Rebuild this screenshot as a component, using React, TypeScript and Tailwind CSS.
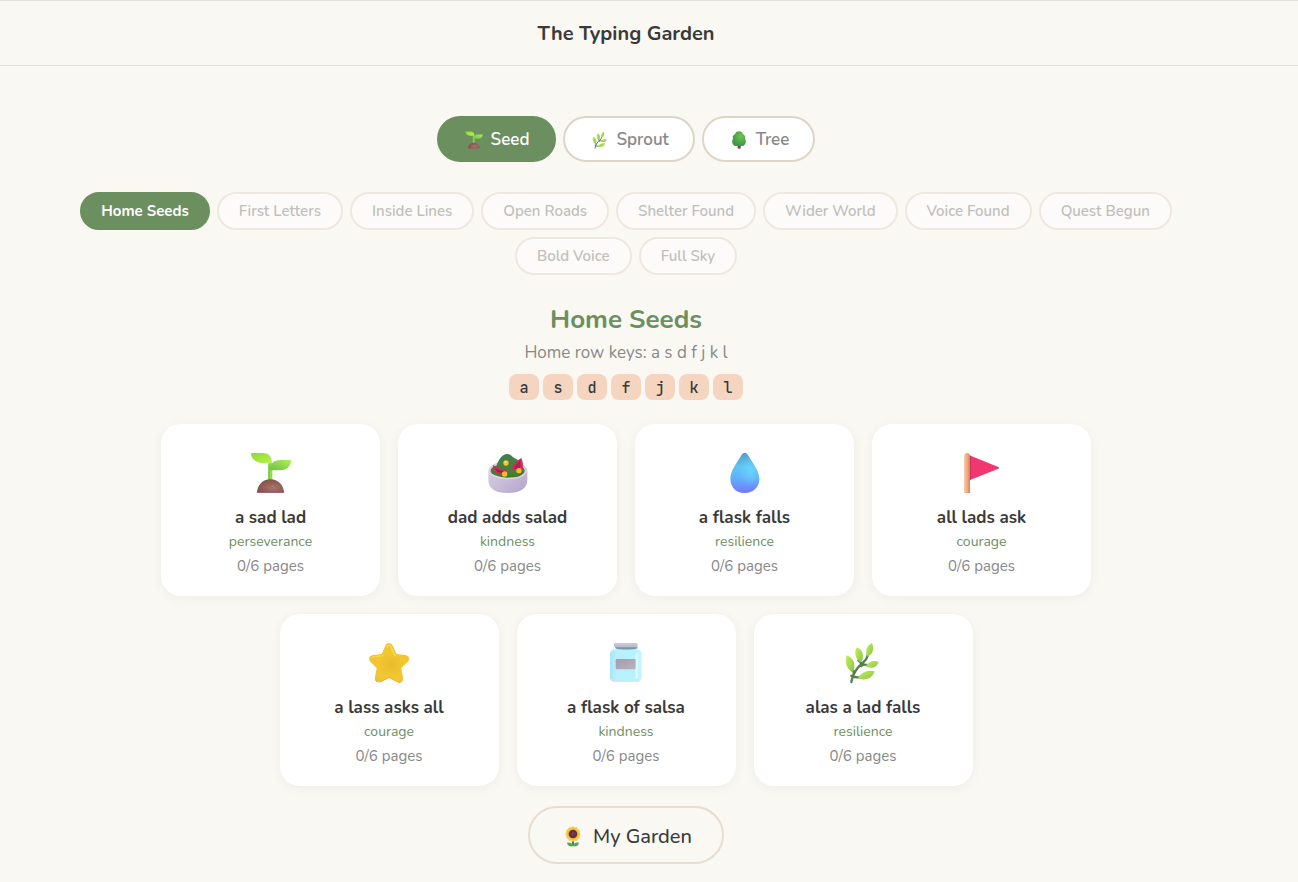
import type { ReactNode } from "react";
import clsx from "clsx";

type IconProps = { className?: string };

// shared by every icon, so the ids only exist once on the page
function Gradients() {
  return (
    <svg className="absolute h-0 w-0" aria-hidden="true">
      <defs>
        <linearGradient id="leafA" x1="0" y1="0" x2="1" y2="1">
          <stop offset="0" stopColor="#8fd636" />
          <stop offset="0.5" stopColor="#a3e63f" />
          <stop offset="1" stopColor="#bdf05a" />
        </linearGradient>
        <linearGradient id="leafB" x1="0" y1="1" x2="1" y2="0">
          <stop offset="0" stopColor="#72bf4c" />
          <stop offset="0.6" stopColor="#94dc4e" />
          <stop offset="1" stopColor="#b4f25a" />
        </linearGradient>
        <linearGradient id="leafC" x1="0" y1="0" x2="1" y2="1">
          <stop offset="0" stopColor="#c3ee5c" />
          <stop offset="0.55" stopColor="#a5d84c" />
          <stop offset="1" stopColor="#86c04a" />
        </linearGradient>
        <radialGradient id="soil" cx="0.6" cy="0.6" r="0.6">
          <stop offset="0" stopColor="#a8746c" />
          <stop offset="1" stopColor="#835149" />
        </radialGradient>
        <linearGradient id="bowl" x1="0" y1="0" x2="1" y2="1">
          <stop offset="0" stopColor="#ddd6e4" />
          <stop offset="0.5" stopColor="#c9bdd8" />
          <stop offset="1" stopColor="#b3a3cc" />
        </linearGradient>
        <linearGradient id="greens" x1="0" y1="0" x2="0" y2="1">
          <stop offset="0" stopColor="#3f8052" />
          <stop offset="1" stopColor="#488033" />
        </linearGradient>
        <linearGradient id="water" x1="0.5" y1="0" x2="0.5" y2="1">
          <stop offset="0" stopColor="#519dcd" />
          <stop offset="0.35" stopColor="#61c5f3" />
          <stop offset="0.6" stopColor="#60b5fa" />
          <stop offset="1" stopColor="#7477fb" />
        </linearGradient>
        <radialGradient id="shine" cx="0.7" cy="0.45" r="0.4">
          <stop offset="0" stopColor="#6fe0ff" stopOpacity="0.6" />
          <stop offset="1" stopColor="#6fe0ff" stopOpacity="0" />
        </radialGradient>
        <linearGradient id="pole" x1="0" y1="0" x2="1" y2="0">
          <stop offset="0" stopColor="#ffcba6" />
          <stop offset="0.5" stopColor="#f3ac83" />
          <stop offset="1" stopColor="#cf8260" />
        </linearGradient>
        <radialGradient id="star" cx="0.55" cy="0.55" r="0.55">
          <stop offset="0" stopColor="#e8bb2e" />
          <stop offset="0.6" stopColor="#f3c731" />
          <stop offset="1" stopColor="#f0c132" />
        </radialGradient>
        <linearGradient id="glass" x1="0" y1="0" x2="1" y2="0">
          <stop offset="0" stopColor="#a9e2fb" />
          <stop offset="0.2" stopColor="#b9f0ff" />
          <stop offset="0.8" stopColor="#b5f2ff" />
          <stop offset="1" stopColor="#c5f6ff" />
        </linearGradient>
        <linearGradient id="label" x1="0" y1="0" x2="1" y2="1">
          <stop offset="0" stopColor="#a49cac" />
          <stop offset="1" stopColor="#b9b2bd" />
        </linearGradient>
        <radialGradient id="crown" cx="0.65" cy="0.35" r="0.6">
          <stop offset="0" stopColor="#6cc552" />
          <stop offset="1" stopColor="#419a45" />
        </radialGradient>
      </defs>
    </svg>
  );
}

function Seedling({ className }: IconProps) {
  return (
    <svg viewBox="30 21 126 126" className={className} aria-hidden="true">
      <path d="M85 54h12v54H85z" fill="#90e043" />
      <path d="M85 58h4v50h-4z" fill="#77c34c" />
      <path d="M36 24h31c18 0 29 10 29 27 0 2-1 3-3 3H72C50 54 37 46 33 28c-1-3 0-4 3-4Z" fill="url(#leafA)" />
      <path d="M89 75c-1-18 13-30 32-30h29c3 0 4 1 4 4-4 18-16 27-33 27H91Z" fill="url(#leafB)" />
      <path d="M51 144c0-23 17-41 40-41s41 18 41 41Z" fill="url(#soil)" />
      <path d="M51 141h81v3H51Z" fill="#a2646f" />
    </svg>
  );
}

function Salad({ className }: IconProps) {
  return (
    <svg viewBox="35 21 126 126" className={className} aria-hidden="true">
      <path d="M39 79c0-18 26-30 58-30s59 12 59 30v25c0 26-21 40-59 40s-58-14-58-40Z" fill="url(#bowl)" />
      <ellipse cx="97" cy="78" rx="57" ry="25" fill="#ddd5e2" />
      <ellipse cx="97" cy="77" rx="51" ry="21" fill="#447d34" />
      <path d="M62 74c2-24 17-47 34-47 11 0 18 13 27 15 10 4 14 20 18 32-20 14-59 14-79 0Z" fill="url(#greens)" />
      <path d="M53 60c10 8 24 13 41 13 4 6 1 12-8 15-17 3-35-8-33-28Z" fill="#d02c5f" />
      <path d="M59 69c8 7 18 10 30 9-8 9-26 6-30-9Z" fill="#9a1f4c" />
      <path d="M138 39c5 12 7 25 2 38-9-5-20-6-32-3 3-13 17-28 30-35Z" fill="#d12b60" />
      <path d="M134 48c2 10 1 18-3 25l-15-1c3-10 9-18 18-24Z" fill="#ae214f" />
      <path d="M84 91c22 4 44 2 60-8-8 14-36 19-60 8Z" fill="#3c772e" />
      <circle cx="92" cy="54" r="8" fill="#f8c331" />
      <circle cx="88" cy="87" r="8" fill="#f7bd2f" />
      <circle cx="131" cy="77" r="8" fill="#f9b82e" />
      <circle cx="90" cy="52" r="3" fill="#ffe065" />
    </svg>
  );
}

function Droplet({ className }: IconProps) {
  const d = "M79 29c4-7 14-7 18 0 13 22 35 48 35 72 0 25-18 43-44 43s-43-18-43-43c0-24 21-50 34-72Z";
  return (
    <svg viewBox="26 21 126 126" className={className} aria-hidden="true">
      <path d={d} fill="url(#water)" />
      <path d={d} fill="url(#shine)" />
    </svg>
  );
}

function Flag({ className }: IconProps) {
  return (
    <svg viewBox="33 21 126 126" className={className} aria-hidden="true">
      <path d="M58 31l87 35c3 1 3 4 0 5l-87 35Z" fill="#f1376f" />
      <path d="M58 31l5 2v71l-5 2Z" fill="#ce315e" />
      <path d="M42 33c0-5 4-9 9-9s9 4 9 9v111H42Z" fill="url(#pole)" />
    </svg>
  );
}

function Star({ className }: IconProps) {
  return (
    <svg viewBox="25 21 126 126" className={className} aria-hidden="true">
      <path
        d="M77 32c4-11 17-11 22 0l12 25 26 3c12 1 15 13 7 21l-19 18 5 28c2 12-8 19-18 13l-24-13-24 13c-10 6-20-2-18-13l5-28-18-18c-9-8-4-20 7-21l26-3Z"
        fill="url(#star)"
      />
      <path d="M47 129c-1 12 7 15 15 11l26-14 24 14c8 3 16 0 17-8-1 12-10 13-18 9l-23-12-24 12c-9 4-16-2-17-12Z" fill="#dba22f" />
      <path d="M82 36c4-7 9-6 12 0l12 26" fill="none" stroke="#fada48" strokeWidth="5" strokeLinecap="round" />
      <path d="M36 69c2-3 5-4 10-4l24-3" fill="none" stroke="#f9d74a" strokeWidth="4" strokeLinecap="round" />
    </svg>
  );
}

function Jar({ className }: IconProps) {
  return (
    <svg viewBox="30 21 126 126" className={className} aria-hidden="true">
      <path d="M63 35h62v14H63Z" fill="#aadff2" />
      <rect x="45" y="43" width="95" height="98" rx="14" fill="url(#glass)" />
      <path d="M50 131c14 7 71 7 84 0-2 7-6 10-11 10H60c-5 0-9-4-10-10Z" fill="#c9e9ff" />
      <path d="M125 58v70" stroke="#ddfcff" strokeWidth="7" strokeLinecap="round" />
      <path d="M61 36h66v4c-8 5-58 5-66 0Z" fill="#7698ad" />
      <rect x="57" y="24" width="71" height="13" rx="6" fill="#bcbed0" />
      <path d="M62 27h60" stroke="#d2d2df" strokeWidth="3" strokeLinecap="round" />
      <rect x="62" y="72" width="60" height="31" rx="4" fill="url(#label)" />
    </svg>
  );
}

function Herb({ className }: IconProps) {
  return (
    <svg viewBox="20 21 126 126" className={className} aria-hidden="true">
      <path
        d="M48 141c5-27 20-46 34-57 11-9 16-20 16-32M48 122c8 5 15 5 26 5M69 76c8 5 10 10 9 17M79 91c7-3 13-3 19 0M50 104c4 3 6 8 5 14"
        fill="none"
        stroke="#55804e"
        strokeWidth="7"
        strokeLinecap="round"
      />
      <path d="M37 62c14 5 22 19 20 34-1 7-3 11-6 16-14-10-23-25-18-47 0-3 2-5 4-3Z" fill="url(#leafC)" />
      <path d="M67 38c13 5 18 18 15 33l-5 11c-14-7-21-24-15-41 1-2 3-4 5-3Z" fill="url(#leafC)" />
      <path d="M110 24c7 17 3 33-13 41-9-16-3-33 13-41Z" fill="url(#leafC)" />
      <path d="M91 94c7-14 21-20 39-14-5 17-22 23-39 14Z" fill="url(#leafC)" />
      <path d="M67 130c11-18 29-27 51-21-6 21-28 30-51 21Z" fill="url(#leafC)" />
    </svg>
  );
}

function Tree({ className }: IconProps) {
  return (
    <svg viewBox="901 390 54 54" className={className} aria-hidden="true">
      <path d="M924 428h9v13c0 3-9 3-9 0Z" fill="#704451" />
      <path
        d="M928 391c6 0 11 4 12 9 6 2 8 8 6 13 6 9 1 22-9 22h-18c-10 0-15-13-9-22-2-5 0-11 6-13 1-5 6-9 12-9Z"
        fill="url(#crown)"
      />
    </svg>
  );
}

const PETALS = [0, 30, 60, 90, 120, 150, 180, 210, 240, 270, 300, 330];

function Sunflower({ className }: IconProps) {
  return (
    <svg viewBox="181 131 78 78" className={className} aria-hidden="true">
      <path d="M217 178h6v19h-6Z" fill="#3f8a45" />
      <path d="M219 198c-10 1-16-3-17-11 9-2 16 2 18 9 2-7 9-11 18-9-1 8-7 12-17 11Z" fill="#4fa95a" />
      {PETALS.map((angle) => (
        <ellipse key={angle} cx="220" cy="146" rx="6" ry="8" fill="#f8cb42" transform={`rotate(${angle} 220 161)`} />
      ))}
      <circle cx="220" cy="161" r="17" fill="#f4b93a" />
      <circle cx="220" cy="161" r="13" fill="#643041" />
      <circle cx="221" cy="160" r="6" fill="#753c43" />
    </svg>
  );
}

const levels: { name: string; icon: ReactNode }[] = [
  { name: "Seed", icon: <Seedling className="size-[18px]" /> },
  { name: "Sprout", icon: <Herb className="size-[18px]" /> },
  { name: "Tree", icon: <Tree className="size-[18px]" /> },
];

const units = [
  "Home Seeds",
  "First Letters",
  "Inside Lines",
  "Open Roads",
  "Shelter Found",
  "Wider World",
  "Voice Found",
  "Quest Begun",
  "Bold Voice",
  "Full Sky",
];

const keys = ["a", "s", "d", "f", "j", "k", "l"];

const stories = [
  { title: "a sad lad", value: "perseverance", Icon: Seedling },
  { title: "dad adds salad", value: "kindness", Icon: Salad },
  { title: "a flask falls", value: "resilience", Icon: Droplet },
  { title: "all lads ask", value: "courage", Icon: Flag },
  { title: "a lass asks all", value: "courage", Icon: Star },
  { title: "a flask of salsa", value: "kindness", Icon: Jar },
  { title: "alas a lad falls", value: "resilience", Icon: Herb },
];

export default function App() {
  return (
    <div className="min-h-screen bg-[#faf8f3] font-['Nunito',Lato,sans-serif] text-[#3a3a3a]">
      <Gradients />
      <header className="border-y border-[#dfe1dd] pt-[18px] pr-[46px] pb-4 text-center">
        <h1 className="text-[20px] leading-[30px] font-bold">The Typing Garden</h1>
      </header>

      <main className="flex flex-col items-center pt-[50px] pr-[46px] pb-[18px]">
        <nav aria-label="Levels" className="flex gap-[7px]">
          {levels.map((level, index) => (
            <button
              key={level.name}
              type="button"
              className={clsx(
                "flex h-[46px] items-center gap-2 rounded-full border-2 pt-px pr-6 pl-[26px] text-[17px] font-semibold",
                index === 0
                  ? "border-[#6b8f5e] bg-[#6b8f5e] text-white"
                  : "border-[#ddd5c8] bg-white text-[#888888]"
              )}
            >
              {level.icon}
              {level.name}
            </button>
          ))}
        </nav>

        <nav aria-label="Units" className="mt-[30px] flex max-w-[1150px] flex-wrap justify-center gap-[7px]">
          {units.map((unit, index) => (
            <button
              key={unit}
              type="button"
              disabled={index > 0}
              className={clsx(
                "h-[38px] rounded-full border-2 text-[15px]",
                index === 0
                  ? "border-[#6b8f5e] bg-[#6b8f5e] px-[19px] font-bold text-white"
                  : "border-[#e4dace] bg-white px-5 font-semibold text-[#888888] opacity-50"
              )}
            >
              {unit}
            </button>
          ))}
        </nav>

        <h2 className="mt-[27px] text-[26px] leading-9 font-bold text-[#6b8f5e]">Home Seeds</h2>
        <p className="mt-[3px] text-[17px] leading-6 text-[#888888]">Home row keys: a s d f j k l</p>
        <div className="mt-[9px] flex gap-1">
          {keys.map((key) => (
            <kbd
              key={key}
              className="flex h-[26px] w-[30px] items-center justify-center rounded-lg bg-[#f5d5c0] pt-0.5 font-['JetBrains_Mono','DejaVu_Sans_Mono',monospace] text-[15px] font-medium"
            >
              {key}
            </kbd>
          ))}
        </div>

        <div className="mt-6 flex max-w-[960px] flex-wrap justify-center gap-[18px]">
          {stories.map(({ title, value, Icon }) => (
            <button
              key={title}
              type="button"
              className="flex h-[172px] w-[219px] flex-col items-center rounded-[20px] bg-white pt-7 shadow-[0_2px_12px_rgba(0,0,0,0.05)]"
            >
              <Icon className="size-[42px]" />
              <span className="mt-3 text-[17px] leading-6 font-bold">{title}</span>
              <span className="text-[14px] leading-6 text-[#6b8f5e]">{value}</span>
              <span className="text-[15px] leading-6 text-[#888888]">0/6 pages</span>
            </button>
          ))}
        </div>

        <button
          type="button"
          className="mt-5 flex h-[58px] items-center gap-[7px] rounded-full border-2 border-[#e7ddd0] px-[30px] pt-[3px] text-[20px] font-medium"
        >
          <Sunflower className="size-[26px]" />
          My Garden
        </button>
      </main>
    </div>
  );
}
